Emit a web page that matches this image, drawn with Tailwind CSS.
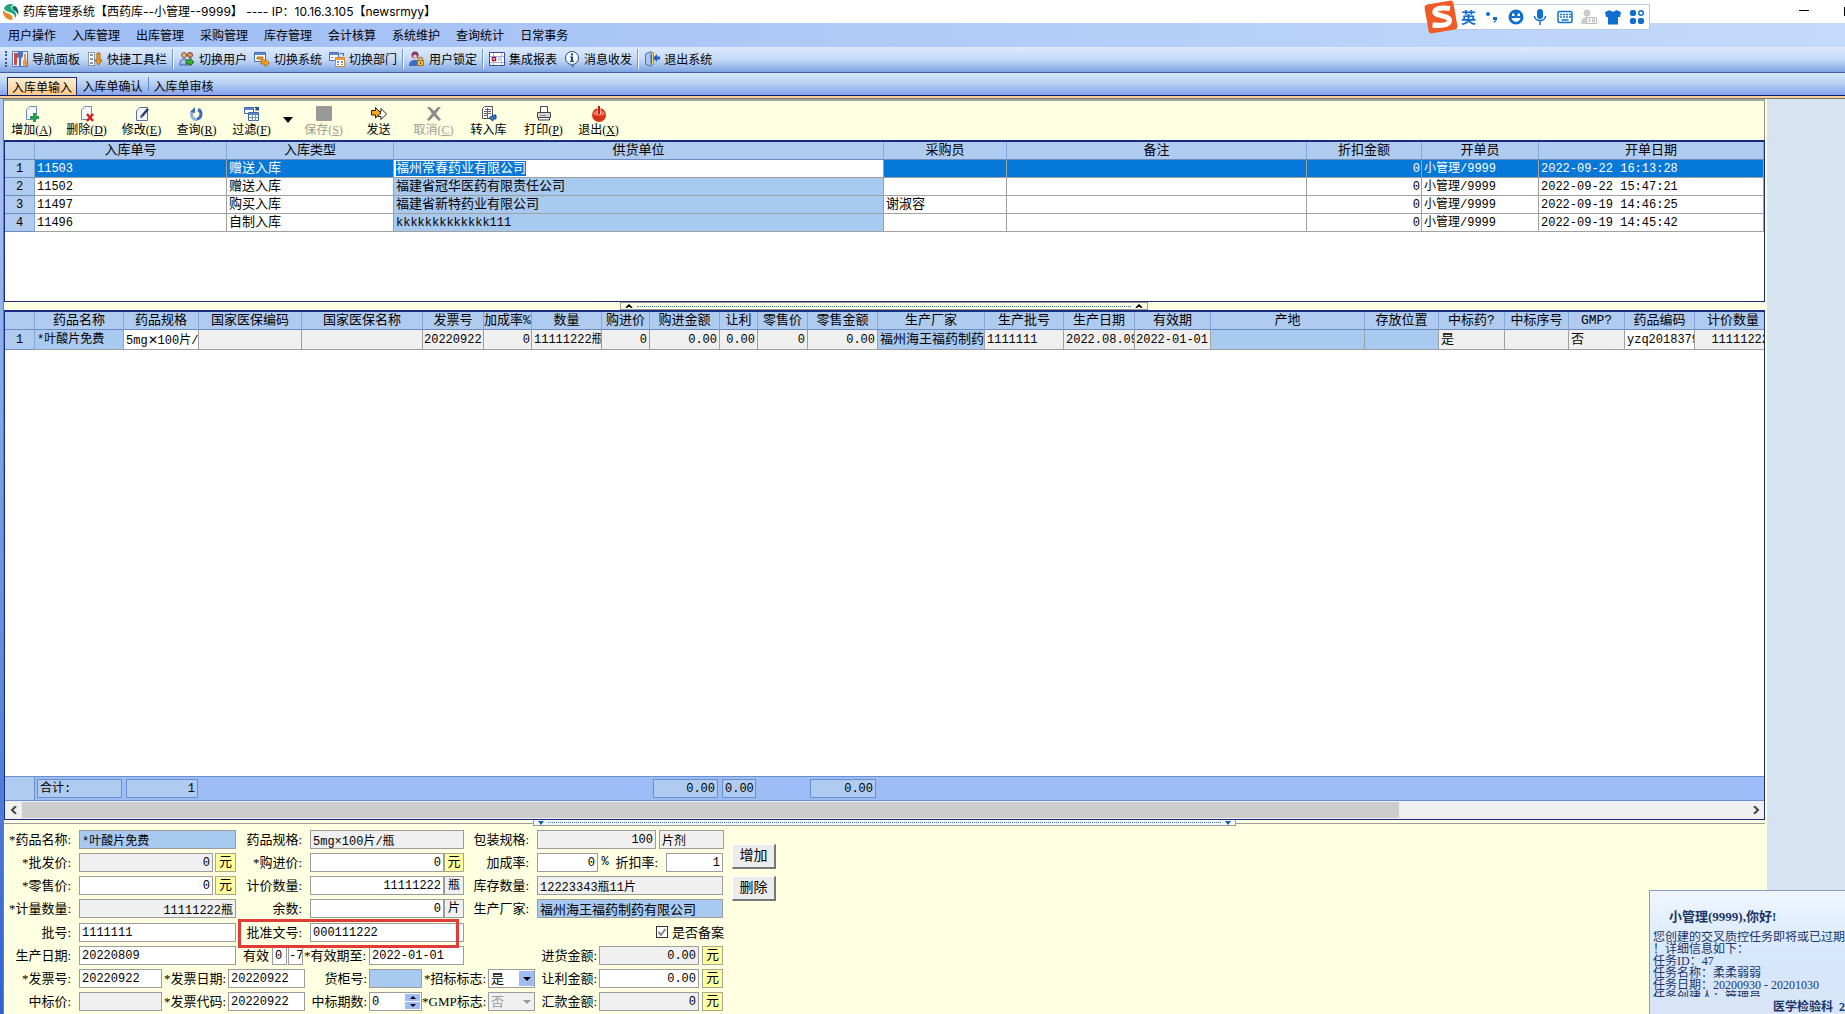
<!DOCTYPE html>
<html lang="zh-CN">
<head>
  <meta charset="UTF-8" />
  <meta name="viewport" content="width=device-width, initial-scale=1" />
  <title>药库管理系统</title>
  <script src="https://cdn.jsdelivr.net/npm/@tailwindcss/browser@4"></script>
</head>
<body class="relative flex h-screen flex-col overflow-hidden bg-white text-xs text-black [font-family:'Liberation_Serif','Noto_Sans_CJK_SC',serif]">

  <!-- Title bar -->
  <header class="flex h-[23px] shrink-0 items-center gap-1 pl-0.5 [font-family:'Inter','Noto_Sans_CJK_SC',sans-serif]">
    <svg class="size-[17px]" viewBox="0 0 17 17">
      <path d="M2 5C4 1 9 0 12 2 8 3 8 5 11 7c4 3 4 6 2 8 0-4-3-5-6-6C4 8 2 7 2 5z" fill="#1fa67a" />
      <path d="M1 7c2 3 5 3 8 5 2 1 2 3 1 5C5 17 0 13 1 7z" fill="#e58a2b" />
      <path d="M13 3c3 2 4 6 3 9-1-4-5-5-6-7 0-1 1-2 3-2z" fill="#0d6b63" />
    </svg>
    <h1 class="whitespace-pre text-xs">药库管理系统【西药库--小管理--9999】 ---- IP：10.16.3.105【newsrmyy】</h1>
  </header>

  <!-- Menu -->
  <nav class="flex h-6 shrink-0 items-center gap-4 bg-linear-to-r from-[#9ebcf5] to-[#c4dafa] pl-2 [font-family:'Noto_Sans_CJK_SC',sans-serif]">
    <a href="#">用户操作</a>
    <a href="#">入库管理</a>
    <a href="#">出库管理</a>
    <a href="#">采购管理</a>
    <a href="#">库存管理</a>
    <a href="#">会计核算</a>
    <a href="#">系统维护</a>
    <a href="#">查询统计</a>
    <a href="#">日常事务</a>
  </nav>

  <!-- Shortcut toolbar -->
  <div class="flex h-[26px] shrink-0 items-center gap-[7px] border-b border-[#3f5f9f] bg-linear-to-b from-[#dceafe] via-[#c4d9f7] to-[#7da4e2] pb-px pl-[5px] [font-family:'Noto_Sans_CJK_SC',sans-serif] [&_button]:flex [&_button]:items-center [&_button]:gap-1 [&_button]:whitespace-nowrap [&_svg]:size-4 [&_svg]:shrink-0">
    <span class="-mr-0.5 h-4 border-l-2 border-dotted border-[#3b5a94]"></span>
    <button>
      <svg viewBox="0 0 16 16"><path fill="#e8eefb" stroke="#5a78b8" d="M.5.5h15v15H.5z" /><path fill="#c8503c" d="M2 2h4v5H5v7H2z" /><path fill="#4a70c0" d="M6 1h5v4L9 8v7H7V8L6 5z" /><path fill="#e59a4a" d="M12 3h2v6h1v6h-4V9h1z" /></svg>
      导航面板
    </button>
    <button>
      <svg viewBox="0 0 16 16"><path fill="#fff" stroke="#445" stroke-dasharray="1 1" d="M1.500 1.500h6v13h-6z" /><path fill="#7c93c0" d="M3 3h3v2H3zM3 7h3v2H3zM3 11h3v2H3z" /><path fill="#f0a020" stroke="#a8640c" d="M10 2h3v7h2l-3.500 5L8 9h2z" /></svg>
      快捷工具栏
    </button>
    <span class="-mx-0.5 h-5 border-l border-[#6f94d0] bg-white pr-px"></span>
    <button>
      <svg viewBox="0 0 16 16"><circle cx="5" cy="4" r="2.500" fill="#e6b27a" stroke="#8a5a30" /><circle cx="11" cy="4" r="2.500" fill="#d89c68" stroke="#8a3030" /><path fill="#a8c0e8" stroke="#40599a" d="M1 14c0-4 1-6 4-6s4 2 4 6z" /><path fill="#3cab3c" stroke="#1b6a1b" d="M7 9h4V7l4 4-4 4v-2H7z" /></svg>
      切换用户
    </button>
    <button>
      <svg viewBox="0 0 16 16"><path fill="#fff" stroke="#4472b8" d="M.5 1.500h11v9H.5z" /><path fill="#5b8ad0" d="M1 2h10v2H1z" /><path fill="#f2a12c" stroke="#b36a10" d="M3 6h6v4h2V8l4.500 4L11 15.500V13H7V8H3z" /></svg>
      切换系统
    </button>
    <button>
      <svg viewBox="0 0 16 16"><path fill="#fff" stroke="#4472b8" d="M.5 1.500h9v8h-9z" /><path fill="#5b8ad0" d="M1 2h8v2H1zM2 6h2v1H2z" /><path fill="#fff" stroke="#d08a30" d="M6.500 6.500h9v9h-9z" /><path fill="#eda03c" d="M7 7h8v2H7z" /><path fill="#7c93c0" d="M8 10h2v2H8zM12 10h2v2h-2zM8 13h2v1H8zM12 13h2v1h-2z" /><path stroke="#3b68b0" fill="none" d="M11 2.500h3.500V5" /></svg>
      切换部门
    </button>
    <span class="-mx-0.5 h-5 border-l border-[#6f94d0] bg-white pr-px"></span>
    <button>
      <svg viewBox="0 0 16 16"><circle cx="6" cy="4" r="3.500" fill="#7c3a66" /><circle cx="6" cy="5.500" r="2" fill="#efc79a" /><path fill="#3c6cc4" d="M0 15c0-4 2-6 6-6s6 2 6 6z" /><path fill="none" stroke="#b8862a" stroke-width="1.500" d="M9.500 10V8.500a2 2 0 0 1 4 0V10" /><path fill="#f5bc3c" stroke="#a8720c" d="M8.500 9.500h6v5h-6z" /><path fill="#7a4c00" d="M11 11h1v2h-1z" /></svg>
      用户锁定
    </button>
    <span class="-mx-0.5 h-5 border-l border-[#6f94d0] bg-white pr-px"></span>
    <button>
      <svg viewBox="0 0 16 16"><path fill="#fff" stroke="#3a4a9a" d="M.5 1.500h15v13H.5z" /><path stroke="#a9b4e0" d="M4.500 2v12M12.500 2v12M1 5.500h14M1 11.500h14" /><path fill="#fff" stroke="#a01838" stroke-width="1.500" d="M3.500 6.500h3v3h-3z" /><path fill="#c8d0f0" d="M9 6h4v4H9z" /></svg>
      集成报表
    </button>
    <button>
      <svg viewBox="0 0 16 16"><circle cx="8" cy="7" r="6.500" fill="#f4f8ff" stroke="#2f4a7c" /><path fill="#f4f8ff" stroke="#2f4a7c" d="M7 13.500l2 2.500v-2.500" /><path fill="#1440a0" d="M7 2.500h2v2H7zM6 5.500h3V10h1v1H6v-1h1V6.500H6z" /></svg>
      消息收发
    </button>
    <span class="-mx-0.5 h-5 border-l border-[#6f94d0] bg-white pr-px"></span>
    <button>
      <svg viewBox="0 0 16 16"><path fill="#a9c6f0" stroke="#5077b8" d="M1.500 3L7 .5v15L1.500 13z" /><path fill="#f5d868" stroke="#b89030" d="M7.500 1.500h2v12h-2z" /><path fill="#c03030" d="M7 4h1v8H7z" /><path fill="#1c5ec8" d="M9 7l4-4v2.500h3v3h-3V11z" /></svg>
      退出系统
    </button>
  </div>

  <!-- Page tabs -->
  <div class="flex h-[23px] shrink-0 items-end border-b border-[#0c1c60] bg-linear-to-b from-[#d8e8fc] via-[#b4cff2] to-[#86a4f0] pl-[7px] [font-family:'Noto_Sans_CJK_SC',sans-serif]">
    <button class="h-[18px] w-[70px] border border-b-0 border-[#1c2c70] bg-linear-to-b from-[#fff0d0] to-[#fdc98c] leading-4 whitespace-nowrap">入库单输入</button>
    <button class="h-[18px] w-[71px] leading-[18px] whitespace-nowrap">入库单确认</button>
    <span class="mb-1 h-3.5 border-l border-[#6688c0]"></span>
    <button class="h-[18px] w-[69px] leading-[18px] whitespace-nowrap">入库单审核</button>
  </div>
  <div class="h-[3px] shrink-0 border-b border-[#777] bg-[#fbcf98]"></div>

  <div class="flex min-h-0 flex-1">
    <div class="w-[3px] shrink-0 bg-linear-to-b from-[#b0c8f4] to-[#2f62d0]"></div>

    <main class="flex min-w-0 flex-1 flex-col border-l border-[#6f7f9f] bg-[#ffffe1]">

      <!-- Actions -->
      <div class="mr-0.5 flex h-[41px] shrink-0 border-t-2 border-r border-[#8c8f88] border-t-[#a4a898] pt-[5px] [&_button]:flex [&_button]:w-[55px] [&_button]:flex-col [&_button]:items-center [&_button]:whitespace-nowrap [&_button]:leading-4 [&_svg]:size-4 [&_svg]:shrink-0">
        <button>
          <svg viewBox="0 0 16 16"><path fill="#f4f8ff" stroke="#7088b0" d="M5.500.5h7v13h-10v-10z" /><path fill="#c3d3ec" d="M5.500.5v3h-3z" /><path fill="#22a046" d="M9 7h3v3h3v3h-3v3H9v-3H6v-3h3z" /></svg>
          <span>增加(<u>A</u>)</span>
        </button>
        <button>
          <svg viewBox="0 0 16 16"><path fill="#f4f8ff" stroke="#7088b0" d="M5.500.5h7v13h-10v-10z" /><path fill="#c3d3ec" d="M5.500.5v3h-3z" /><path stroke="#dc2020" stroke-width="2.500" d="M8 8l6 7M14 8l-6 7" /></svg>
          <span>删除(<u>D</u>)</span>
        </button>
        <button>
          <svg viewBox="0 0 16 16"><path fill="#f0f4fc" stroke="#5c70a0" d="M5.500 1.500h8v13h-11v-10z" /><path fill="#c3d3ec" d="M5.500 1.500v3h-3z" /><path stroke="#27386e" stroke-width="2.500" d="M14 3l-6 7" /><path fill="#27386e" d="M6 12l1-3 2 2z" /></svg>
          <span>修改(<u>E</u>)</span>
        </button>
        <button>
          <svg viewBox="0 0 16 16" fill="none" stroke-width="3"><path stroke="#3f6cb4" d="M9 3.500A5 5 0 0 1 8 13" /><path stroke="#8fb0dc" d="M8 13.500A5 5 0 0 1 4 5" /><path fill="#3f6cb4" d="M1 6l5-5v6z" stroke="none" /></svg>
          <span>查询(<u>R</u>)</span>
        </button>
        <button>
          <svg viewBox="0 0 16 16"><path fill="#fff" stroke="#3f68a8" d="M.5 1.500h9v6h-9zM4.500 6.500h10v8h-10z" /><path fill="#5b86c8" d="M1 2h8v2H1zM5 7h9v2H5z" /><path stroke="#6f90c4" d="M5 11.500h9M8.500 9v6M11.500 9v6" /><path fill="#234c94" d="M10 1h5v4l-2-1-1 1-1-1 1-1z" /></svg>
          <span>过滤(<u>F</u>)</span>
        </button>
        <button class="w-[17px]! pt-[11px]" aria-label="过滤选项"><span class="border-x-[5px] border-t-[6px] border-x-transparent border-t-black"></span></button>
        <button class="text-[#9c9c94]">
          <svg viewBox="0 0 16 16"><rect width="16" height="15" rx="1" fill="#999" /></svg>
          <span>保存(<u>S</u>)</span>
        </button>
        <button>
          <svg viewBox="0 0 16 16" stroke="#222"><path fill="#fff" d="M7 5.500h3V2.500l5.500 5.500-5.500 5.500v-3H7z" /><path fill="#f5a81c" d="M.5 4.500h4V1.500L10 7l-5.500 5v-3h-4z" /></svg>
          <span>发送</span>
        </button>
        <button class="text-[#9c9c94]">
          <svg viewBox="0 0 16 16"><path fill="#8c8c8c" d="M1 1h3l4 4 4-4h3l-5 6.500 5 6-2 1.500-5-5-5 5-2-1.500 5-6z" /></svg>
          <span>取消(<u>C</u>)</span>
        </button>
        <button>
          <svg viewBox="0 0 16 16"><path fill="#fff" stroke="#555" d="M3.500.5h8v12h-10v-10z" /><path stroke="#666" d="M4 3.500h6M3 5.500h7M3 7.500h7M3 9.500h4M6.500 2v10" /><path fill="#3c78c0" stroke="#1c4c8c" d="M15 9v4h-3v2l-4-3 4-3v2h1V9z" /></svg>
          <span>转入库</span>
        </button>
        <button>
          <svg viewBox="0 0 16 16" stroke="#444"><path fill="#fff" d="M4.500.5h7v6h-7z" /><path fill="#d8d8d8" d="M1.500 6.500h13v5h-13z" /><path fill="#f8f8f8" d="M2.500 11.500h11v2.500h-11z" /><path stroke="#888" d="M4 9.500h6" /></svg>
          <span>打印(<u>P</u>)</span>
        </button>
        <button>
          <svg viewBox="0 0 16 16"><circle cx="8" cy="9" r="7" fill="#d8321c" /><path fill="#f0785a" d="M2 8c1-5 11-5 12 0-3 2-9 2-12 0z" /><path stroke="#fff" stroke-width="3" d="M8 0v8" /><path stroke="#c01c10" stroke-width="2" d="M8 0v8" /></svg>
          <span>退出(<u>X</u>)</span>
        </button>
      </div>

      <!-- Receipts -->
      <section class="mr-0.5 h-[162px] shrink-0 overflow-hidden border-2 border-r border-b border-l border-[#1a2c80] bg-white">
        <table class="w-full table-fixed border-separate border-spacing-0 leading-4 [font-family:'Liberation_Mono','Noto_Sans_CJK_SC',monospace] [&_td]:h-[18px] [&_td]:overflow-hidden [&_td]:border-r [&_td]:border-b [&_td]:border-[#a0a0a0] [&_td]:px-0.5 [&_td]:pt-px [&_td]:whitespace-nowrap [&_th]:h-[18px] [&_th]:border-r [&_th]:border-b [&_th]:border-r-[#86a6d8] [&_th]:border-b-[#6c8cc0] [&_th]:bg-[#b0cbf0] [&_th]:pt-px [&_th]:text-[13px] [&_th]:font-normal [&_tbody_th]:text-xs">
          <colgroup>
            <col class="w-[30px]" /><col class="w-[192px]" /><col class="w-[167px]" /><col class="w-[490px]" /><col class="w-[123px]" /><col class="w-[300px]" /><col class="w-[115px]" /><col class="w-[117px]" /><col />
          </colgroup>
          <thead>
            <tr><th></th><th>入库单号</th><th>入库类型</th><th>供货单位</th><th>采购员</th><th>备注</th><th>折扣金额</th><th>开单员</th><th>开单日期</th></tr>
          </thead>
          <tbody>
            <tr class="bg-[#0678d8] text-white">
              <th class="text-black">1</th><td>11503</td><td class="text-[13px]">赠送入库</td>
              <td class="bg-white text-[13px]"><span class="bg-[#0678d8]">福州常春药业有限公司</span></td>
              <td></td><td></td><td class="pr-px! text-right">0</td><td>小管理/9999</td><td>2022-09-22 16:13:28</td>
            </tr>
            <tr>
              <th>2</th><td>11502</td><td class="text-[13px]">赠送入库</td><td class="bg-[#a8c9f0] text-[13px]">福建省冠华医药有限责任公司</td>
              <td></td><td></td><td class="pr-px! text-right">0</td><td>小管理/9999</td><td>2022-09-22 15:47:21</td>
            </tr>
            <tr>
              <th>3</th><td>11497</td><td class="text-[13px]">购买入库</td><td class="bg-[#a8c9f0] text-[13px]">福建省新特药业有限公司</td>
              <td class="text-[13px]">谢淑容</td><td></td><td class="pr-px! text-right">0</td><td>小管理/9999</td><td>2022-09-19 14:46:25</td>
            </tr>
            <tr>
              <th>4</th><td>11496</td><td class="text-[13px]">自制入库</td><td class="bg-[#a8c9f0]">kkkkkkkkkkkkk111</td>
              <td></td><td></td><td class="pr-px! text-right">0</td><td>小管理/9999</td><td>2022-09-19 14:45:42</td>
            </tr>
          </tbody>
        </table>
      </section>

      <!-- Splitter -->
      <div class="flex h-2 shrink-0 justify-center pr-1">
        <div class="flex w-[528px] items-center gap-1 border border-[#999] px-1">
          <svg class="h-1 w-2" viewBox="0 0 8 4"><path d="M1 4l3-3 3 3" fill="none" stroke="#000" stroke-width="1.500" /></svg>
          <span class="flex-1 border-t border-dotted border-[#3c70a8]"></span>
          <svg class="h-1 w-2" viewBox="0 0 8 4"><path d="M1 4l3-3 3 3" fill="none" stroke="#000" stroke-width="1.500" /></svg>
        </div>
      </div>

      <!-- Receipt lines -->
      <section class="mr-0.5 flex min-h-0 flex-1 flex-col overflow-hidden border-2 border-r border-b border-l border-[#1a2c80] bg-white">
        <div class="min-h-0 flex-1 overflow-hidden">
          <table class="w-[calc(100%+8px)] table-fixed border-separate border-spacing-0 leading-4 [font-family:'Liberation_Mono','Noto_Sans_CJK_SC',monospace] [&_td]:h-[18px] [&_td]:overflow-hidden [&_td]:border-r [&_td]:border-b [&_td]:border-[#a0a0a0] [&_td]:px-0.5 [&_td]:pt-px [&_td]:whitespace-nowrap [&_th]:h-[18px] [&_th]:overflow-hidden [&_th]:border-r [&_th]:border-b [&_th]:border-r-[#86a6d8] [&_th]:border-b-[#6c8cc0] [&_th]:bg-[#b0cbf0] [&_th]:pt-px [&_th]:text-[13px] [&_th]:font-normal [&_th]:whitespace-nowrap [&_tbody_th]:text-xs">
            <colgroup>
              <col class="w-[30px]" /><col class="w-[89px]" /><col class="w-[75px]" /><col class="w-[103px]" /><col class="w-[121px]" /><col class="w-[61px]" /><col class="w-[48px]" /><col class="w-[70px]" /><col class="w-[48px]" /><col class="w-[70px]" /><col class="w-[38px]" /><col class="w-[50px]" /><col class="w-[70px]" /><col class="w-[107px]" /><col class="w-[79px]" /><col class="w-[71px]" /><col class="w-[76px]" /><col class="w-[154px]" /><col class="w-[74px]" /><col class="w-[66px]" /><col class="w-[64px]" /><col class="w-[56px]" /><col class="w-[70px]" /><col />
            </colgroup>
            <thead>
              <tr><th></th><th>药品名称</th><th>药品规格</th><th>国家医保编码</th><th>国家医保名称</th><th>发票号</th><th>加成率%</th><th>数量</th><th>购进价</th><th>购进金额</th><th>让利</th><th>零售价</th><th>零售金额</th><th>生产厂家</th><th>生产批号</th><th>生产日期</th><th>有效期</th><th>产地</th><th>存放位置</th><th>中标药?</th><th>中标序号</th><th>GMP?</th><th>药品编码</th><th>计价数量</th></tr>
            </thead>
            <tbody>
              <tr class="bg-[#f0f0f0]">
                <th>1</th>
                <td class="bg-[#a8c9f0]">*叶酸片免费</td>
                <td class="bg-white">5mg<span class="[font-family:'Noto_Sans_CJK_SC']">✕</span>100片/瓶</td>
                <td></td><td></td>
                <td class="px-px!">20220922</td>
                <td class="pr-px! text-right">0</td>
                <td>11111222瓶</td>
                <td class="text-right">0</td>
                <td class="text-right">0.00</td>
                <td class="text-right">0.00</td>
                <td class="text-right">0</td>
                <td class="text-right">0.00</td>
                <td class="bg-[#a8c9f0] text-[13px]">福州海王福药制药</td>
                <td>1111111</td>
                <td>2022.08.09</td>
                <td class="px-px!">2022-01-01</td>
                <td class="bg-[#a8c9f0]"></td>
                <td class="bg-[#a8c9f0]"></td>
                <td class="text-[13px]">是</td>
                <td></td>
                <td class="text-[13px]">否</td>
                <td class="bg-white">yzq2018379</td>
                <td class="text-right">11111222</td>
              </tr>
            </tbody>
          </table>
        </div>

        <!-- Totals -->
        <div class="flex h-[25px] shrink-0 items-center border-y border-[#6890cc] bg-[#9ebcf6] [font-family:'Liberation_Mono','Noto_Sans_CJK_SC',monospace] [&_output]:h-[19px] [&_output]:border [&_output]:border-[#6890cc] [&_output]:bg-[#b0cbf0] [&_output]:px-0.5 [&_output]:text-right [&_output]:leading-[19px]">
          <span class="h-full w-[30px] border-r border-[#6890cc] bg-[#b0cbf0]"></span>
          <output class="ml-0.5 w-[85px] text-left!">合计:</output>
          <output class="ml-1 w-[72px]">1</output>
          <output class="ml-[455px] w-[65px]">0.00</output>
          <output class="ml-1 w-[34px]">0.00</output>
          <output class="ml-[54px] w-[66px]">0.00</output>
        </div>

        <!-- Horizontal scrollbar -->
        <div class="flex h-[18px] shrink-0 items-center bg-[#f0f0f0]">
          <button class="flex w-[17px] justify-center" aria-label="向左"><svg class="size-2" viewBox="0 0 8 8"><path d="M6 0L2 4l4 4" fill="none" stroke="#444" stroke-width="2" /></svg></button>
          <div class="h-4 flex-1"><div class="h-full w-[79.8%] bg-[#cdcdcd]"></div></div>
          <button class="flex w-[17px] justify-center" aria-label="向右"><svg class="size-2" viewBox="0 0 8 8"><path d="M2 0l4 4-4 4" fill="none" stroke="#444" stroke-width="2" /></svg></button>
        </div>
      </section>

      <!-- Splitter -->
      <div class="mr-0.5 flex h-1.5 shrink-0 items-center">
        <span class="flex-1 border-t border-[#a09a98]"></span>
        <div class="flex h-full w-[703px] items-center gap-1 border border-t-0 border-[#999] bg-[#f4f8ff] px-1">
          <span class="border-x-[3px] border-t-[4px] border-x-transparent border-t-[#0b62a8]"></span>
          <span class="flex-1 border-t border-dotted border-[#3c70a8]"></span>
          <span class="border-x-[3px] border-t-[4px] border-x-transparent border-t-[#0b62a8]"></span>
        </div>
        <span class="flex-1 border-t border-[#a09a98]"></span>
      </div>

      <!-- Entry form -->
      <form class="flex shrink-0 pt-1 pb-[3px] [&_input]:h-[19px] [&_input]:border [&_input]:border-[#9c9c9c] [&_input]:bg-white [&_input]:px-0.5 [&_input]:[font-family:'Liberation_Mono','Noto_Sans_CJK_SC',monospace] [&_input:read-only]:bg-[#f0f0f0] [&_label]:shrink-0 [&_label]:pr-2 [&_label]:text-right [&_label]:text-[13px] [&_label]:leading-5 [&_label]:whitespace-nowrap [&_label]:h-[19px]">
        <div>
          <div class="flex flex-col gap-1">
            <div class="flex">
              <label for="name" class="w-[75px]">*药品名称:</label>
              <input id="name" class="w-[157px] bg-[#a8c9f0]!" value="*叶酸片免费" />
              <label for="spec" class="w-[74px]">药品规格:</label>
              <input id="spec" class="w-[154px]" value="5mg×100片/瓶" readonly />
              <label for="pack" class="w-[73px]">包装规格:</label>
              <input id="pack" class="mr-[3px] w-[119px] text-right" value="100" readonly />
              <input class="w-[65px]" value="片剂" aria-label="剂型" readonly />
            </div>
            <div class="flex">
              <label for="wholesale" class="w-[75px]">*批发价:</label>
              <input id="wholesale" class="mr-0.5 w-[134px] text-right" value="0" readonly />
              <span class="w-[21px] border border-[#a8a890] bg-[#ffffa0] text-center text-[13px] leading-4">元</span>
              <label for="cost" class="w-[74px]">*购进价:</label>
              <input id="cost" class="w-[134px] text-right" value="0" />
              <span class="w-5 border border-[#a8a890] bg-[#ffffa0] text-center text-[13px] leading-4">元</span>
              <label for="markup" class="w-[73px]">加成率:</label>
              <input id="markup" class="w-[61px] text-right" value="0" />
              <span class="w-[14px] text-center leading-[19px] [font-family:'Liberation_Mono']">%</span>
              <label for="discount" class="w-[54px]">折扣率:</label>
              <input id="discount" class="w-[57px] text-right" value="1" />
            </div>
            <div class="flex">
              <label for="retail" class="w-[75px]">*零售价:</label>
              <input id="retail" class="mr-0.5 w-[134px] text-right" value="0" />
              <span class="w-[21px] border border-[#a8a890] bg-[#ffffa0] text-center text-[13px] leading-4">元</span>
              <label for="qty" class="w-[74px]">计价数量:</label>
              <input id="qty" class="w-[134px] text-right" value="11111222" />
              <span class="w-5 border border-[#9c9c9c] bg-[#f0f0f0] text-center leading-4">瓶</span>
              <label for="stock" class="w-[73px]">库存数量:</label>
              <input id="stock" class="w-[186px]" value="12223343瓶11片" readonly />
            </div>
            <div class="flex">
              <label for="measure" class="w-[75px]">*计量数量:</label>
              <input id="measure" class="w-[157px] text-right" value="11111222瓶" readonly />
              <label for="rest" class="w-[74px]">余数:</label>
              <input id="rest" class="w-[134px] text-right" value="0" />
              <span class="w-5 border border-[#9c9c9c] bg-[#f0f0f0] text-center leading-4">片</span>
              <label for="maker" class="w-[73px]">生产厂家:</label>
              <input id="maker" class="w-[186px] bg-[#a8c9f0]! text-[13px]" value="福州海王福药制药有限公司" />
            </div>
          </div>

          <div class="mt-[5px] flex flex-col gap-1">
            <div class="relative flex">
              <label for="batch" class="w-[75px]">批号:</label>
              <input id="batch" class="w-[157px]" value="1111111" />
              <label for="approval" class="w-[74px]">批准文号:</label>
              <input id="approval" class="w-[154px]" value="000111222" />
              <input id="record" type="checkbox" class="mt-[3px] ml-[192px] size-3! appearance-none border-[#333]! bg-white! p-0!" checked />
              <label for="record" class="ml-1 pr-0!">是否备案</label>
              <svg class="pointer-events-none absolute top-1 left-[653px] size-2.5" viewBox="0 0 10 10"><path d="M1.500 5l2.500 3 4.500-6" fill="none" stroke="#888" stroke-width="2" /></svg>
              <span class="pointer-events-none absolute -top-1 left-[234px] h-[29px] w-[221px] border-[3px] border-[#e03c38]"></span>
            </div>
            <div class="flex">
              <label for="made" class="w-[75px]">生产日期:</label>
              <input id="made" class="w-[157px]" value="20220809" />
              <label for="valid" class="w-9 pr-[3px]!">有效</label>
              <input id="valid" class="mr-px w-[15px]" value="0" />
              <input class="w-[15px] px-0!" value="-7" aria-label="有效偏移" />
              <label for="expiry" class="w-[66px] pr-[3px]!">*有效期至:</label>
              <input id="expiry" class="w-[95px]" value="2022-01-01" />
              <label for="amount" class="w-[135px] pr-0.5!">进货金额:</label>
              <input id="amount" class="mr-[3px] w-[100px] text-right" value="0.00" readonly />
              <span class="w-[21px] border border-[#a8a890] bg-[#ffffa0] text-center text-[13px] leading-4">元</span>
            </div>
            <div class="flex">
              <label for="invoice" class="w-[75px]">*发票号:</label>
              <input id="invoice" class="w-[83px]" value="20220922" />
              <label for="invoice-date" class="w-[66px] pr-0.5!">*发票日期:</label>
              <input id="invoice-date" class="w-[77px]" value="20220922" />
              <label for="shelf" class="w-16 pr-0.5!">货柜号:</label>
              <input id="shelf" class="w-[53px] bg-[#a8c9f0]!" />
              <label for="bid" class="w-[66px] pr-0.5!">*招标标志:</label>
              <div class="relative">
                <select id="bid" class="h-[19px] w-[47px] appearance-none border border-[#9c9c9c] bg-white px-0.5 text-[13px] leading-4"><option>是</option></select>
                <span class="pointer-events-none absolute inset-y-0.5 right-px flex w-[15px] items-center justify-center bg-[#9ebcf6]"><span class="border-x-4 border-t-4 border-x-transparent border-t-black"></span></span>
              </div>
              <label for="rebate" class="w-16 pr-0.5!">让利金额:</label>
              <input id="rebate" class="mr-[3px] w-[100px] text-right" value="0.00" />
              <span class="w-[21px] border border-[#a8a890] bg-[#ffffa0] text-center text-[13px] leading-4">元</span>
            </div>
            <div class="flex">
              <label for="bid-price" class="w-[75px]">中标价:</label>
              <input id="bid-price" class="w-[83px]" readonly />
              <label for="invoice-code" class="w-[66px] pr-0.5!">*发票代码:</label>
              <input id="invoice-code" class="w-[77px]" value="20220922" />
              <label for="bid-term" class="w-16 pr-0.5!">中标期数:</label>
              <div class="relative">
                <input id="bid-term" class="w-[53px]" value="0" />
                <span class="absolute inset-y-0.5 right-0.5 flex w-[15px] flex-col gap-px">
                  <button type="button" aria-label="增" class="flex flex-1 items-center justify-center bg-[#9ebcf6]"><span class="border-x-[3px] border-b-[3px] border-x-transparent border-b-black"></span></button>
                  <button type="button" aria-label="减" class="flex flex-1 items-center justify-center bg-[#9ebcf6]"><span class="border-x-[3px] border-t-[3px] border-x-transparent border-t-black"></span></button>
                </span>
              </div>
              <label for="gmp" class="w-[66px] pr-0.5!">*GMP标志:</label>
              <div class="relative">
                <select id="gmp" class="h-[19px] w-[47px] appearance-none border border-[#9c9c9c] bg-[#f0f0f0] px-0.5 text-[13px] leading-4 text-[#999] opacity-100" disabled><option>否</option></select>
                <span class="pointer-events-none absolute inset-y-0.5 right-px flex w-[15px] items-center justify-center"><span class="border-x-4 border-t-4 border-x-transparent border-t-[#999]"></span></span>
              </div>
              <label for="remit" class="w-16 pr-0.5!">汇款金额:</label>
              <input id="remit" class="mr-[3px] w-[100px] text-right" value="0" readonly />
              <span class="w-[21px] border border-[#a8a890] bg-[#ffffa0] text-center text-[13px] leading-4">元</span>
            </div>
          </div>
        </div>

        <div class="ml-2 flex flex-col gap-[7px] pt-3.5">
          <button type="button" class="h-[25px] w-11 border border-r-2 border-b-2 border-[#fff] border-r-[#777] border-b-[#777] bg-[#ececec] text-sm leading-5">增加</button>
          <button type="button" class="h-[25px] w-11 border border-r-2 border-b-2 border-[#fff] border-r-[#777] border-b-[#777] bg-[#ececec] text-sm leading-5">删除</button>
        </div>
      </form>
    </main>

    <aside class="w-[78px] shrink-0 bg-[#d6e3f0]"></aside>
  </div>

  <!-- Input method bar -->
  <div class="absolute top-1 right-[195px] flex h-[26px] w-[222px] items-center justify-between border border-[#b4cae8] bg-white pr-1 pl-8 text-[#0f6fd0] [&_svg]:size-4">
    <svg class="absolute -top-1.5 -left-1.5 size-9!" viewBox="0 0 32 32"><rect x="3" y="3" width="26" height="26" rx="3" fill="#f05a24" transform="rotate(-10 16 16)" /><path fill="none" stroke="#fff" stroke-width="4.500" d="M24 8.500c-6-1-13-.5-13.500 3s13 3 13 7.500-8 5-15 4" /></svg>
    <span class="text-[15px] leading-4 font-bold [font-family:'Noto_Sans_CJK_SC',sans-serif]">英</span>
    <svg viewBox="0 0 16 16" fill="currentColor"><circle cx="4" cy="5" r="2" /><path d="M9 8h4c.5 3-1 5-3 6l-.5-1c1-.5 1.500-1 1.500-2H9z" /></svg>
    <svg viewBox="0 0 16 16"><circle cx="8" cy="8" r="7.500" fill="currentColor" /><path fill="#fff" d="M4 4.500h2.500V7H4zM9.500 4.500H12V7H9.500zM3.500 9h9c-1 5-8 5-9 0z" /></svg>
    <svg viewBox="0 0 16 16"><rect x="5" y="0" width="6" height="10" rx="3" fill="currentColor" /><path d="M2.500 7c0 6 11 6 11 0M8 12v4" fill="none" stroke="currentColor" stroke-width="1.500" /></svg>
    <svg viewBox="0 0 16 16"><rect x="1" y="2.500" width="14" height="11" rx="1.500" fill="none" stroke="currentColor" stroke-width="1.500" /><path stroke="currentColor" stroke-width="1.500" stroke-dasharray="2 1" d="M3 5.500h11M3 8h11" /><path stroke="currentColor" stroke-width="1.500" d="M4.500 11h7" /></svg>
    <svg viewBox="0 0 16 16"><circle cx="6" cy="4" r="3.500" fill="#ccc" /><path fill="#ccc" d="M0 15c0-5 2-7 6-7v7z" /><path fill="#fff" stroke="#bbb" d="M5.500 8.500h10v6h-10z" /><path fill="none" stroke="#bbb" d="M7 10.500h2v2H7M11.500 10v3h2v-3z" /></svg>
    <svg viewBox="0 0 16 16"><path fill="currentColor" d="M5 1c1 2 5 2 6 0l5 2-1 5h-2v7.500H3V8H1L0 3z" /></svg>
    <svg viewBox="0 0 16 16" fill="currentColor"><rect x="1" y="1" width="6" height="6" rx="2" /><rect x="1" y="9" width="6" height="6" rx="2" /><rect x="9" y="9" width="6" height="6" rx="2" /><circle cx="12" cy="4" r="2.300" fill="none" stroke="currentColor" stroke-width="1.500" /></svg>
  </div>
  <button class="absolute top-[10px] right-9 h-px w-[10px] bg-black" aria-label="最小化"></button>
  <button class="absolute top-[7px] right-0 h-[9px] w-px bg-black" aria-label="最大化"></button>

  <!-- Message popup -->
  <div class="absolute right-0 bottom-0 h-[124px] w-[196px] overflow-hidden border-t border-l border-[#8a9cc0] bg-linear-to-b from-[#f0f6ff] via-[#d6e8fc] to-[#d8e4f8] pl-[3px] whitespace-nowrap text-[#1c3468]">
    <h2 class="mt-[18px] ml-4 text-[13px] leading-4 font-bold">小管理(9999),你好!</h2>
    <div class="mt-1.5 h-[66px] overflow-hidden leading-3">
      <p>您创建的交叉质控任务即将或已过期</p>
      <p>！详细信息如下：</p>
      <p>任务ID：47</p>
      <p>任务名称：柔柔弱弱</p>
      <p>任务日期：20200930 - 20201030</p>
      <p>任务创建人：管理员</p>
    </div>
    <p class="mt-0.5 ml-[120px] leading-4 font-bold whitespace-pre">医学检验科  2022</p>
  </div>
</body>
</html>
